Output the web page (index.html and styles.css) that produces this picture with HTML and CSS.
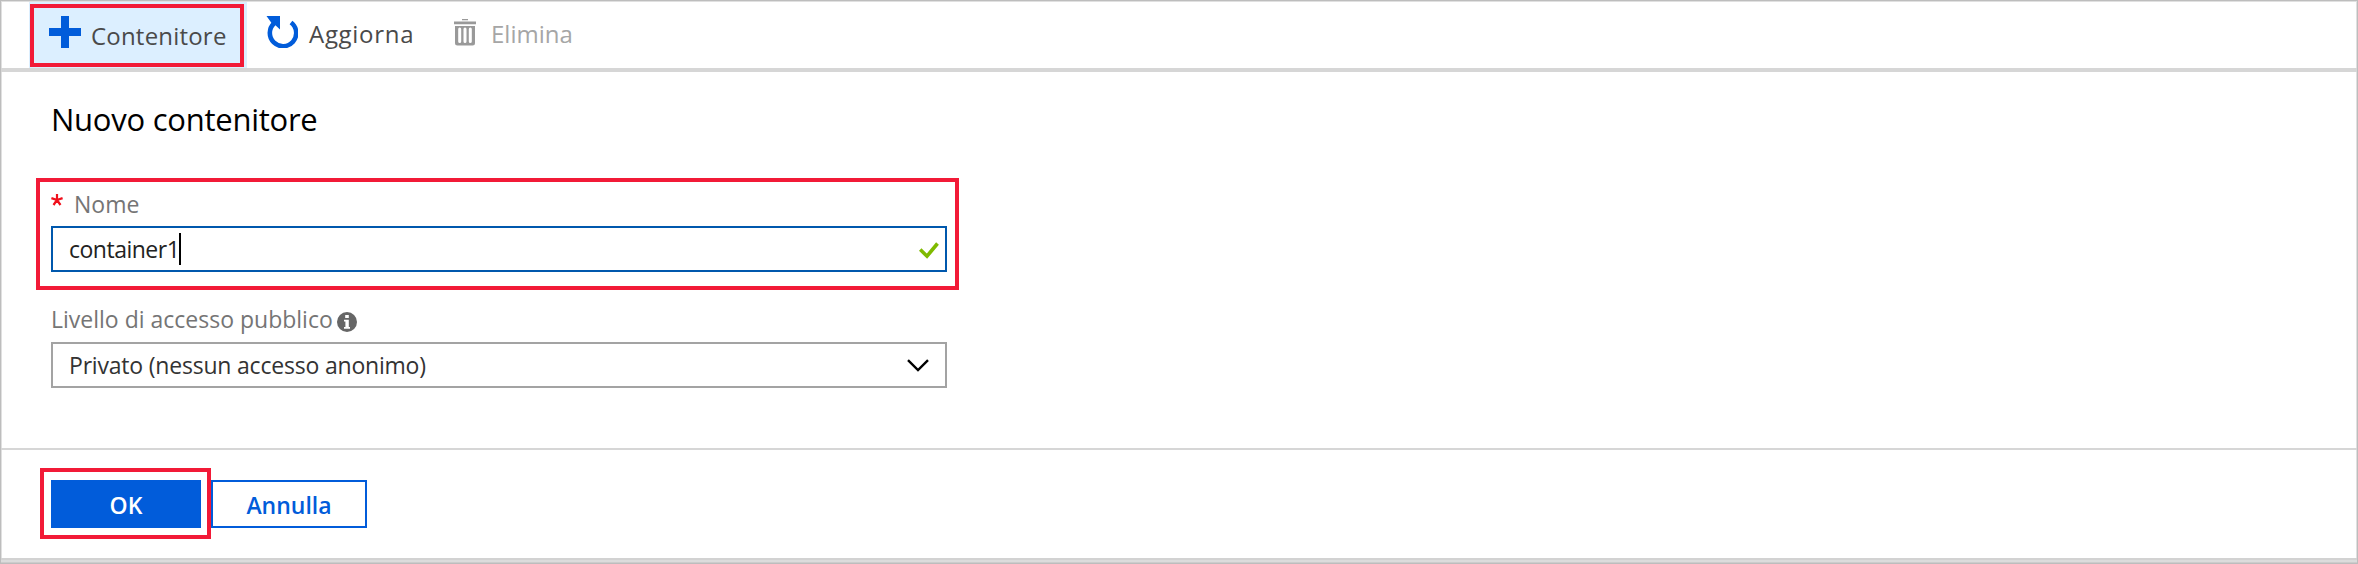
FILE: index.html
```html
<!DOCTYPE html>
<html lang="it">
<head>
<meta charset="utf-8">
<title>Nuovo contenitore</title>
<link rel="stylesheet" href="styles.css">
</head>
<body>
<div class="panel">
  <div class="toolbar">
    <div class="command command-add highlighted">
      <svg class="icon-plus" width="32" height="32" viewBox="0 0 32 32"><path d="M12 0h8v12h12v8H20v12h-8V20H0v-8h12z" fill="#015cda"/></svg>
      <span class="text-add">Contenitore</span>
    </div>
    <div class="command command-refresh">
      <svg class="icon-refresh" width="32" height="32" viewBox="0 0 32 32"><path d="M8.200 7.200A13.200 13.200 0 1 0 25 6.500" fill="none" stroke="#015cda" stroke-width="4.600"/><path d="M.5 0H14v13.500L8.600 8.400 5.500 7z" fill="#015cda"/></svg>
      <span class="text-refresh">Aggiorna</span>
    </div>
    <div class="command command-delete">
      <svg class="icon-trash" width="22" height="27" viewBox="0 0 22 27"><path d="M8 0h6v1.300H8zM0 2.500h22v2.700H0zM1 7h20v17q0 2.500-2.500 2.500h-15Q1 26.500 1 24z" fill="#999"/><path d="M5.700 10v12.500M11 10v12.500M16.300 10v12.500" stroke="#fff" stroke-width="3" stroke-linecap="round"/></svg>
      <span class="text-delete">Elimina</span>
    </div>
  </div>
  <div class="form">
    <h1 class="title">Nuovo contenitore</h1>
    <div class="field highlighted field-name">
      <div class="label"><svg class="required" width="12" height="12" viewBox="0 0 12 12"><path d="M6 6V0M6 6L.4 4.100M6 6l5.600-1.900M6 6l-3.500 5M6 6l3.500 5" stroke="#f0101c" stroke-width="2.200"/></svg><span class="text-name">Nome</span></div>
      <div class="input"><span class="text-value">container1</span><span class="caret"></span>
        <svg class="icon-check" width="20" height="17" viewBox="0 0 20 17"><path d="M1.200 7.500L8 14.200 18.500 1.500" fill="none" stroke="#7fba00" stroke-width="3.600"/></svg>
      </div>
    </div>
    <div class="field field-access">
      <div class="label"><span class="text-access">Livello di accesso pubblico</span><svg class="icon-info" width="20" height="20" viewBox="0 0 20 20"><circle cx="10" cy="10" r="10" fill="#666"/><path d="M8.200 3h3.600v3H8.200zM7 7.800h4.800V15H13v1.800H7V15h1.400V9.500H7z" fill="#fff"/></svg></div>
      <div class="input select"><span class="text-option">Privato (nessun accesso anonimo)</span>
        <svg class="icon-chevron" width="22" height="13" viewBox="0 0 22 13"><path d="M1 1.200l10 9.800L21 1.200" fill="none" stroke="#000" stroke-width="2.400"/></svg>
      </div>
    </div>
  </div>
  <div class="footer">
    <div class="button-primary highlighted"><span class="text-ok">OK</span></div>
    <div class="button-secondary"><span class="text-cancel">Annulla</span></div>
  </div>
  <div class="bottom-bar"></div>
</div>
</body>
</html>
```
FILE: styles.css
```css
*, *::after { box-sizing: border-box; }
body { margin: 0; font-family: "Open Sans", "Noto Sans", sans-serif; background: #fff; }
svg { display: block; flex: none; }
span { white-space: nowrap; }
.panel { width: 2358px; height: 564px; display: flex; flex-direction: column; border: 1px solid #bdbdbd; box-shadow: inset 0 0 0 1px #e0e0e0; }
.toolbar { height: 71px; padding: 1px 0 0 28px; border-bottom: 4px solid #d6d6d6; display: flex; flex: none; color: #4a4a4a; font-size: 24px; line-height: 34px; }
.command { display: flex; align-items: flex-start; height: 66px; }
.command-add { width: 218px; padding-left: 20px; background: #dcefff; }
.highlighted { position: relative; }
.highlighted::after { content: ""; position: absolute; border: 4px solid #f21a37; }
.command-add::after { left: 1px; top: 2px; width: 214px; height: 63px; }
.icon-plus { margin-top: 14px; }
.text-add { margin: 17px 0 0 10px; letter-spacing: 0.2px; }
.command-refresh { margin-left: 19px; width: 188px; }
.icon-refresh { margin-top: 14px; }
.text-refresh { margin: 15px 0 0 11px; letter-spacing: 0.7px; }
.icon-trash { margin-top: 17px; }
.text-delete { margin: 15px 0 0 15px; color: #a6a6a6; }
.form { height: 376px; padding: 0 0 0 50px; flex: none; }
.title { margin: 0; padding-top: 25px; height: 106px; font-size: 31px; line-height: 44px; font-weight: 400; letter-spacing: -0.25px; color: #000; white-space: nowrap; }
.field { width: 896px; }
.label { display: flex; color: #757575; font-size: 23px; line-height: 32px; }
.field-name { height: 112px; }
.field-name::after { left: -15px; top: 0; width: 923px; height: 112px; }
.field-name .label { height: 48px; padding-top: 10px; }
.required { margin-top: 6px; }
.text-name { margin-left: 11px; }
.input { height: 46px; border: 2px solid #0058ad; padding: 0 6px 0 16px; display: flex; align-items: center; font-size: 23px; line-height: 32px; color: #222; }
.text-value { letter-spacing: -0.5px; }
.caret { width: 2px; height: 32px; background: #000; margin-left: 0; }
.icon-check { margin-left: auto; margin-top: 3px; }
.field-access .label { height: 52px; padding-top: 13px; }
.icon-info { margin: 9px 0 0 4px; }
.select { border-color: #a3a3a3; padding-right: 16px; color: #333; }
.text-option { letter-spacing: -0.2px; }
.icon-chevron { margin-left: auto; }
.footer { height: 110px; border-top: 2px solid #d6d6d6; padding: 30px 0 0 50px; display: flex; gap: 10px; flex: none; }
.button-primary, .button-secondary { height: 48px; display: flex; align-items: center; justify-content: center; padding-top: 2px; font-size: 23px; line-height: 32px; font-weight: 600; }
.button-primary { width: 150px; background: #015cda; color: #fff; }
.button-primary::after { left: -11px; top: -12px; width: 171px; height: 71px; }
.button-secondary { width: 156px; border: 2px solid #015cda; color: #015cda; }
.bottom-bar { height: 5px; flex: none; background: #dcdcdc; border-top: 2px solid #d2d2d2; border-bottom: 1px solid #ccc; }
```
